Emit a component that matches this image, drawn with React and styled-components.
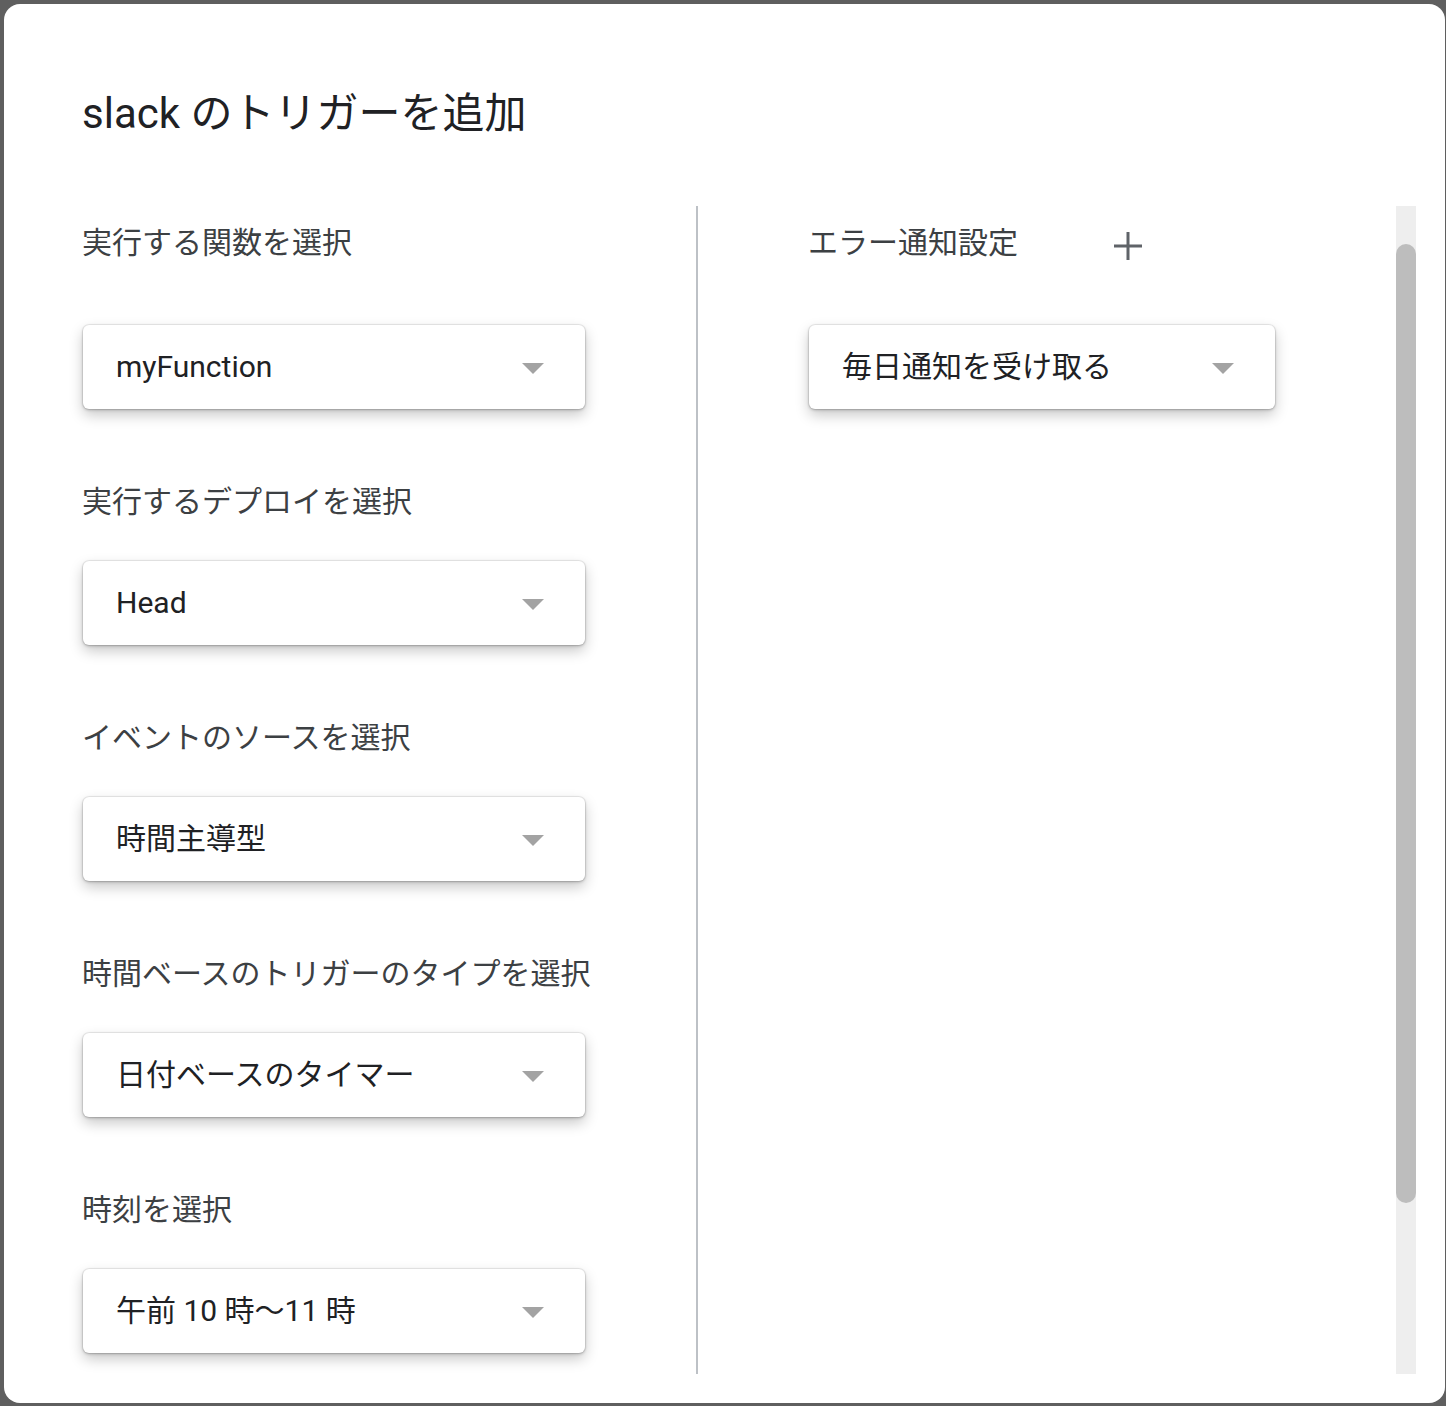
import React from 'react';
import styled, { createGlobalStyle } from 'styled-components';

const GlobalStyle = createGlobalStyle`
  html, body {
    margin: 0;
    padding: 0;
    background: #5f5f5f;
  }
  body {
    font-family: Roboto, "Noto Sans CJK JP", sans-serif;
  }
`;

const fields = [
  { label: '実行する関数を選択', value: 'myFunction', gap: 62 },
  { label: '実行するデプロイを選択', value: 'Head', gap: 39 },
  { label: 'イベントのソースを選択', value: '時間主導型', gap: 39 },
  { label: '時間ベースのトリガーのタイプを選択', value: '日付ベースのタイマー', gap: 39 },
  { label: '時刻を選択', value: '午前 10 時〜11 時', gap: 39 },
];

const App = () => {
  return (
    <>
      <GlobalStyle />
      <Dialog>
        <Header>
          <Title>slack のトリガーを追加</Title>
        </Header>
        <Body>
          <LeftColumn>
            {fields.map((f, idx) => (
              <Field key={idx}>
                <Label>{f.label}</Label>
                <Select $gap={f.gap} $width={502}>
                  <span>{f.value}</span>
                  <Arrow />
                </Select>
              </Field>
            ))}
          </LeftColumn>
          <Divider />
          <RightColumn>
            <Field>
              <LabelRow>
                <Label>エラー通知設定</Label>
                <PlusButton>
                  <svg width="28" height="28" viewBox="0 0 28 28">
                    <path d="M14 0v28M0 14h28" stroke="#5f6368" strokeWidth="3" fill="none" />
                  </svg>
                </PlusButton>
              </LabelRow>
              <Select $gap={62} $width={466}>
                <span>毎日通知を受け取る</span>
                <Arrow />
              </Select>
            </Field>
          </RightColumn>
          <ScrollTrack>
            <ScrollThumb />
          </ScrollTrack>
        </Body>
      </Dialog>
    </>
  );
};

export default App;

const Dialog = styled.div`
  margin: 4px 1px 3px 4px;
  height: 1399px;
  background: #fff;
  border-radius: 16px;
  display: flex;
  flex-direction: column;
  overflow: hidden;
`;

const Header = styled.div`
  height: 202px;
  padding: 86px 0 0 78px;
  box-sizing: border-box;
`;

const Title = styled.h1`
  margin: 0;
  font-size: 42px;
  line-height: 48px;
  font-weight: 400;
  color: #202124;
  font-family: Roboto, "Noto Sans CJK JP", sans-serif;
`;

const Body = styled.div`
  display: flex;
  height: 1168px;
  overflow: hidden;
  padding-right: 29px;
`;

const LeftColumn = styled.div`
  width: 692px;
  box-sizing: border-box;
  padding: 17px 0 0 78px;
  display: flex;
  flex-direction: column;
  gap: 73px;
`;

const RightColumn = styled.div`
  flex: 1;
  box-sizing: border-box;
  padding: 17px 0 0 110px;
  display: flex;
  flex-direction: column;
`;

const Divider = styled.div`
  width: 2px;
  background: #bdc1c6;
`;

const Field = styled.div`
  display: flex;
  flex-direction: column;
`;

const LabelRow = styled.div`
  display: flex;
  align-items: center;
  height: 40px;
`;

const Label = styled.div`
  font-size: 30px;
  line-height: 40px;
  color: #3c4043;
  white-space: nowrap;
`;

const PlusButton = styled.div`
  margin-left: 96px;
  width: 28px;
  height: 40px;
  padding-top: 6px;
  box-sizing: border-box;
  display: flex;
  align-items: center;
  justify-content: center;
`;

const Select = styled.div`
  margin-top: ${(p) => p.$gap}px;
  margin-left: 1px;
  width: ${(p) => p.$width}px;
  height: 84px;
  box-sizing: border-box;
  padding: 0 41px 0 33px;
  display: flex;
  align-items: center;
  justify-content: space-between;
  background: #fff;
  border-radius: 6px;
  box-shadow: 0 0 0 1px rgba(0, 0, 0, 0.06), 0 1px 3px rgba(0, 0, 0, 0.24),
    0 6px 14px rgba(0, 0, 0, 0.22);
  font-size: 30px;
  color: #202124;

  > span {
    line-height: 40px;
    white-space: nowrap;
  }
`;

const Arrow = styled.div`
  width: 0;
  height: 0;
  border-left: 11px solid transparent;
  border-right: 11px solid transparent;
  border-top: 11px solid #a3a3a3;
  margin-top: 2px;
`;

const ScrollTrack = styled.div`
  width: 20px;
  background: #eeeeee;
  display: flex;
  flex-direction: column;
`;

const ScrollThumb = styled.div`
  margin-top: 38px;
  height: 959px;
  background: #bdbdbd;
  border-radius: 10px;
`;
